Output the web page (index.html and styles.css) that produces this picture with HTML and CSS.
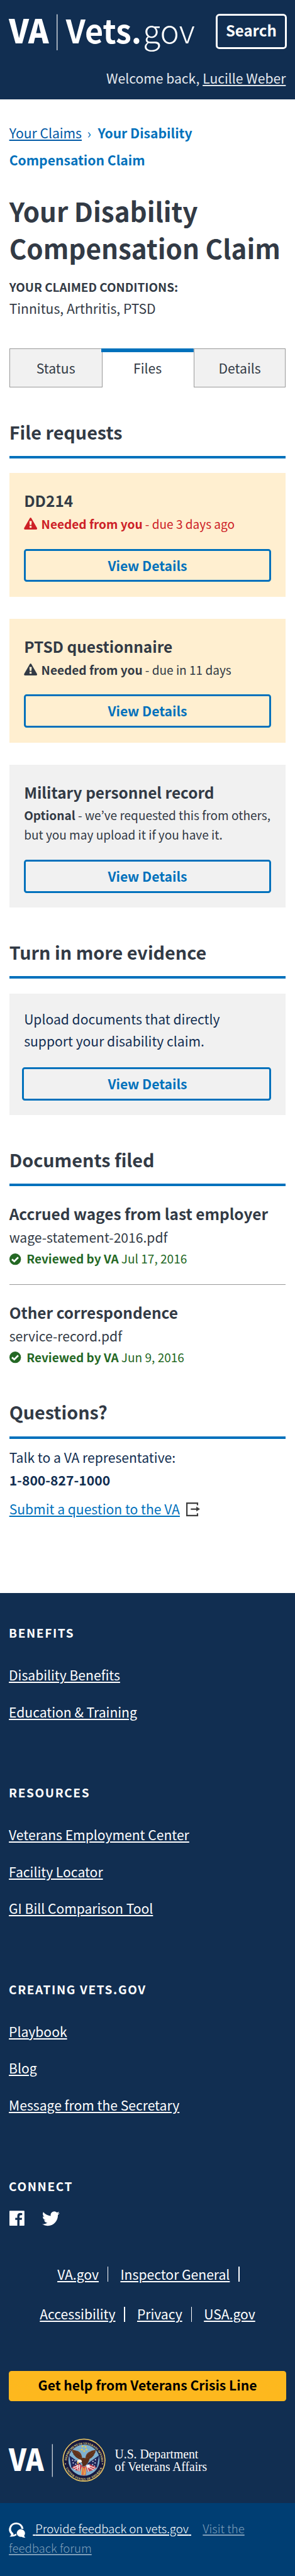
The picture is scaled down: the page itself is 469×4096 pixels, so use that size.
FILE: index.html
```html
<!DOCTYPE html>
<html lang="en">
<head>
<meta charset="utf-8">
<meta name="viewport" content="width=device-width, initial-scale=1">
<title>Your Disability Compensation Claim | Vets.gov</title>
<link rel="stylesheet" href="styles.css">
</head>
<body>
<header class="site-header">
  <div class="header-bar">
    <svg class="brand" viewBox="0 0 440 150" role="img" aria-label="VA Vets.gov">
      <text x="19.5" y="94.7" class="brand-va" textLength="86" lengthAdjust="spacingAndGlyphs">VA</text>
      <rect x="123" y="31" width="1.6" height="78" fill="#fff"/>
      <text x="143" y="94" class="brand-vets" textLength="164" lengthAdjust="spacingAndGlyphs">Vets.</text>
      <text x="310" y="94" class="brand-gov" textLength="112.5" lengthAdjust="spacingAndGlyphs">gov</text>
    </svg>
    <button class="search-button" type="button">Search</button>
  </div>
  <p class="welcome">Welcome back, <a href="#">Lucille Weber</a></p>
</header>

<main class="content">
  <nav class="breadcrumbs"><a href="#">Your Claims</a><span class="crumb-sep">›</span><strong>Your Disability Compensation Claim</strong></nav>
  <h1>Your Disability Compensation Claim</h1>
  <h2 class="conditions-label">Your claimed conditions:</h2>
  <p class="conditions">Tinnitus, Arthritis, PTSD</p>

  <nav class="tabs">
    <a class="tab tab-first" href="#">Status</a>
    <a class="tab tab-active" href="#">Files</a>
    <a class="tab" href="#">Details</a>
  </nav>

  <section class="section">
    <h2 class="section-title">File requests</h2>
    <article class="card card-warning">
      <h3>DD214</h3>
      <p class="card-status overdue"><svg class="warn-icon" viewBox="0 0 29 26"><path fill="currentColor" fill-rule="evenodd" d="M12.9.9Q14.500-.9 16.100.9L28.600 23Q29.400 25.600 27 26H2Q-.4 25.600.4 23ZM12.100 7.600V10L12.700 16H16.300L16.900 10V7.600ZM12.300 18V22H16.700V18Z"/></svg><strong>Needed from you</strong> - due 3 days ago</p>
      <a class="button" href="#">View Details</a>
    </article>
    <article class="card card-warning">
      <h3>PTSD questionnaire</h3>
      <p class="card-status"><svg class="warn-icon" viewBox="0 0 29 26"><path fill="currentColor" fill-rule="evenodd" d="M12.9.9Q14.500-.9 16.100.9L28.600 23Q29.400 25.600 27 26H2Q-.4 25.600.4 23ZM12.100 7.600V10L12.700 16H16.300L16.900 10V7.600ZM12.300 18V22H16.700V18Z"/></svg><strong>Needed from you</strong> - due in 11 days</p>
      <a class="button" href="#">View Details</a>
    </article>
    <article class="card">
      <h3>Military personnel record</h3>
      <p class="card-status"><strong>Optional</strong> - we’ve requested this from others, but you may upload it if you have it.</p>
      <a class="button" href="#">View Details</a>
    </article>
  </section>

  <section class="section">
    <h2 class="section-title">Turn in more evidence</h2>
    <article class="card card-upload">
      <p class="upload-text">Upload documents that directly support your disability claim.</p>
      <a class="button" href="#">View Details</a>
    </article>
  </section>

  <section class="section">
    <h2 class="section-title">Documents filed</h2>
    <article class="document">
      <h3>Accrued wages from last employer</h3>
      <p class="file-name">wage-statement-2016.pdf</p>
      <p class="reviewed"><svg class="check-icon" viewBox="0 0 25 25"><circle cx="12.500" cy="12.500" r="12.500" fill="currentColor"/><path d="M5.500 12.800 10.500 17.300 19 8.600" fill="none" stroke="#fff" stroke-width="3.800"/></svg><strong>Reviewed by VA</strong> Jul 17, 2016</p>
    </article>
    <article class="document">
      <h3>Other correspondence</h3>
      <p class="file-name">service-record.pdf</p>
      <p class="reviewed"><svg class="check-icon" viewBox="0 0 25 25"><circle cx="12.500" cy="12.500" r="12.500" fill="currentColor"/><path d="M5.500 12.800 10.500 17.300 19 8.600" fill="none" stroke="#fff" stroke-width="3.800"/></svg><strong>Reviewed by VA</strong> Jun 9, 2016</p>
    </article>
  </section>

  <section class="section questions">
    <h2 class="section-title">Questions?</h2>
    <p class="phone">Talk to a VA representative:<br><strong>1-800-827-1000</strong></p>
    <p class="submit"><a href="#">Submit a question to the VA</a><svg class="exit-icon" viewBox="0 0 30 30"><path d="M24.500 6V1.500H1.500V28.500H24.500V23.500M10 14.500H24" fill="none" stroke="#3e3e3e" stroke-width="3"/><path d="M22 9 30 14.300 22 19.500Z" fill="#3e3e3e"/></svg></p>
  </section>
</main>

<footer class="site-footer">
  <section class="footer-group">
    <h4>Benefits</h4>
    <ul><li><a href="#">Disability Benefits</a></li><li><a href="#">Education &amp; Training</a></li></ul>
  </section>
  <section class="footer-group">
    <h4>Resources</h4>
    <ul><li><a href="#">Veterans Employment Center</a></li><li><a href="#">Facility Locator</a></li><li><a href="#">GI Bill Comparison Tool</a></li></ul>
  </section>
  <section class="footer-group">
    <h4>Creating Vets.gov</h4>
    <ul><li><a href="#">Playbook</a></li><li><a href="#">Blog</a></li><li><a href="#">Message from the Secretary</a></li></ul>
  </section>
  <section class="connect">
    <h4>Connect</h4>
    <div class="social">
      <svg class="facebook" viewBox="0 0 32 32"><path fill="#fff" fill-rule="evenodd" d="M1 0H31Q32 0 32 1V31Q32 32 31 32H21.500V19.500H26.300L27 15.200H21.500V12Q21.500 9.600 24.200 9.600H27.200V5.200Q25.500 4.900 23.500 4.900 16.800 4.900 16.800 11.400V15.200H12.400V19.500H16.800V32H1Q0 32 0 31V1Q0 0 1 0Z"/></svg>
      <svg class="twitter" viewBox="0 2 24 20" preserveAspectRatio="none"><path fill="#fff" d="M23.953 4.570a10 10 0 0 1-2.825.775 4.958 4.958 0 0 0 2.163-2.723c-.951.555-2.005.959-3.127 1.184a4.920 4.920 0 0 0-8.384 4.482C7.690 8.095 4.067 6.130 1.640 3.162a4.822 4.822 0 0 0-.666 2.475c0 1.710.870 3.213 2.188 4.096a4.904 4.904 0 0 1-2.228-.616v.060a4.923 4.923 0 0 0 3.946 4.827 4.996 4.996 0 0 1-2.212.085 4.936 4.936 0 0 0 4.604 3.417 9.867 9.867 0 0 1-6.102 2.105c-.390 0-.779-.023-1.170-.067a13.995 13.995 0 0 0 7.557 2.209c9.053 0 13.998-7.496 13.998-13.985 0-.210 0-.420-.015-.630A9.935 9.935 0 0 0 24 4.590z"/></svg>
    </div>
  </section>
  <nav class="legal">
    <div class="legal-row legal-row-first"><a href="#">VA.gov</a><span class="bar"></span><a href="#">Inspector General</a><span class="bar"></span></div>
    <div class="legal-row"><a href="#">Accessibility</a><span class="bar"></span><a href="#">Privacy</a><span class="bar"></span><a href="#">USA.gov</a></div>
  </nav>
  <a class="crisis" href="#">Get help from Veterans Crisis Line</a>
  <svg class="va-logo" viewBox="0 0 440 96" role="img" aria-label="VA U.S. Department of Veterans Affairs">
    <defs>
      <path id="arc-top" d="M50 176A112 112 0 0 1 274 176"/>
      <path id="arc-bottom" d="M39 200A127 127 0 0 0 285 200"/>
      <clipPath id="seal-inner"><circle cx="162" cy="166" r="101"/></clipPath>
    </defs>
    <text x="0" y="70.700" class="logo-va" textLength="76" lengthAdjust="spacingAndGlyphs">VA</text>
    <rect x="93.700" y="12.700" width="1.400" height="71" fill="#fff"/>
    <svg x="115.500" y="0" width="95" height="95" viewBox="20 24 284 284">
      <circle cx="162" cy="166" r="140" fill="#16183f"/>
      <circle cx="162" cy="166" r="136" fill="none" stroke="#d8b95a" stroke-width="7"/>
      <circle cx="162" cy="166" r="136" fill="none" stroke="#f6e7a0" stroke-width="2.500" stroke-dasharray="5 5"/>
      <circle cx="162" cy="166" r="101" fill="#7fb1d0"/>
      <g clip-path="url(#seal-inner)">
        <path d="M66 134 142 190 128 236 80 215Z" fill="#20285c"/>
        <path d="M260 134 184 188 200 236 246 212Z" fill="#20285c"/>
        <g fill="#e4e8f2"><circle cx="88" cy="166" r="4"/><circle cx="104" cy="170" r="4"/><circle cx="92" cy="184" r="4"/><circle cx="108" cy="192" r="4"/><circle cx="98" cy="206" r="4"/><circle cx="236" cy="164" r="4"/><circle cx="220" cy="174" r="4"/><circle cx="234" cy="184" r="4"/><circle cx="218" cy="194" r="4"/><circle cx="230" cy="204" r="4"/></g>
        <path d="M82 214 130 188 150 200 136 240 110 232Z" fill="#c8404c"/>
        <path d="M92 216 128 200M98 228 134 206M116 196 124 234M134 194 132 238" stroke="#f3ecec" stroke-width="5"/>
        <path d="M244 214 200 192 172 204 186 242 216 232Z" fill="#c8404c"/>
        <path d="M234 218 198 204M226 230 190 212M180 206 192 240" stroke="#f3ecec" stroke-width="5"/>
        <path d="M148 208 178 206 174 262H144Z" fill="#d6453f"/>
        <path d="M150 212 148 260M160 218 162 264M172 212 168 258" stroke="#f1d257" stroke-width="5"/>
      </g>
      <path d="M82 96Q92 132 112 148L134 162 150 160Q150 120 124 108 100 100 82 96ZM240 98Q210 102 190 116 170 132 172 158L196 160Q226 148 240 98Z" fill="#6b3a20"/>
      <path d="M84 112 134 144M98 106 144 146M236 114 184 146M222 106 178 142M226 132 186 156M92 126 130 154" stroke="#3d2013" stroke-width="3"/>
      <path d="M136 160Q150 146 170 152L198 158Q192 186 168 204L150 206Q156 186 140 178Z" fill="#5a2f1a"/>
      <path d="M116 180Q118 162 136 162 150 164 148 180 138 176 130 182 126 188 122 192Z" fill="#f4f1ea"/>
      <path d="M118 178 128 176 124 192Q114 190 118 178Z" fill="#e4b23c"/>
      <path d="M176 200 196 192 202 210 180 216Z" fill="#eef0f4"/>
      <g fill="#f0cf45"><path id="star" d="M152 68 154.500 74H161L156 78 158 84.500 152 80.500 146 84.500 148 78 143 74H149.500Z"/><use href="#star" x="20" y="3"/><use href="#star" x="-4" y="20"/><use href="#star" x="26" y="20"/><use href="#star" x="11" y="30"/></g>
      <g class="seal-text">
        <text><textPath href="#arc-top" textLength="346" startOffset="8">DEPARTMENT OF VETERANS AFFAIRS</textPath></text>
        <text><textPath href="#arc-bottom" textLength="300" startOffset="18">UNITED STATES OF AMERICA</textPath></text>
      </g>
      <circle cx="42" cy="190" r="3.500" fill="#f3e08a"/><circle cx="282" cy="190" r="3.500" fill="#f3e08a"/>
    </svg>
    <text x="229.800" y="43.700" class="logo-dept" textLength="181" lengthAdjust="spacingAndGlyphs">U.S. Department</text>
    <text x="229.800" y="70.700" class="logo-dept" textLength="200" lengthAdjust="spacingAndGlyphs">of Veterans Affairs</text>
  </svg>
</footer>

<aside class="feedback">
  <svg class="feedback-icon" viewBox="0 0 36 33"><path fill="#fff" d="M16 0A15.700 15 0 0 1 31.800 13.500H27.200A11.200 10.500 0 1 0 9.300 22.500Q11 24 9.500 26.500L13 25.500 16.500 24V28Q10 31.500 1.500 30.500 6 27.500 4.500 25A15.700 15 0 0 1 16 0Z"/><path fill="#fff" d="M26.600 14.500A8.800 8.800 0 0 1 33.200 28.700Q33.500 31 36 32.500 31.500 33 28 30.900A8.800 8.300 0 1 1 26.600 14.500Z"/></svg><a class="feedback-main" href="#">Provide feedback on vets.gov</a><a class="feedback-forum" href="#">Visit the feedback forum</a>
</aside>
</body>
</html>
```
FILE: styles.css
```css
/* 1rem is ten design units */
html {
  font-size: 7.334px;
  background: #003e73;
}

*,
*::before {
  box-sizing: border-box;
}

body {
  margin: 0;
  width: 100%;
  background: #fff;
  color: #323a45;
  font-family: "Noto Sans CJK JP", "Noto Sans", sans-serif;
  font-size: 2.88rem;
  line-height: 4rem;
  -webkit-font-smoothing: antialiased;
}

h1, h2, h3, h4, p, ul {
  margin: 0;
  padding: 0;
}

ul {
  list-style: none;
}

svg {
  display: block;
  overflow: visible;
}

a {
  text-decoration-thickness: 1.5px;
  text-underline-offset: .3rem;
}

/* Header */
.site-header {
  height: 21.6rem;
  background: #112e51;
  color: #e4e8ed;
}

.header-bar {
  display: flex;
  justify-content: space-between;
  height: 10.6rem;
  padding-right: 1.8rem;
}

.brand {
  width: 44rem;
  height: 15rem;
  flex: none;
}

.brand text,
.logo-va {
  fill: #fff;
}

.brand-va {
  font-size: 72px;
  font-weight: 900;
}

.brand-vets {
  font-size: 70px;
  font-weight: 700;
}

.brand-gov {
  font-size: 70px;
  font-weight: 300;
}

.search-button {
  width: 15.4rem;
  height: 7.6rem;
  margin: 3rem 0 0;
  padding: 0 0 .4rem;
  border: 3px solid #fff;
  border-radius: .8rem;
  background: transparent;
  color: #fff;
  font: 700 3.27rem/1 "Noto Sans CJK JP", sans-serif;
}

.welcome {
  margin-top: 4.44rem;
  padding-right: 2rem;
  text-align: right;
}

.welcome a {
  color: inherit;
}

/* Main column */
.content {
  padding: 4.34rem 2rem 16.16rem;
}

.breadcrumbs {
  line-height: 5.8rem;
  color: #0071bc;
}

.breadcrumbs a {
  color: #0059a6;
}

.crumb-sep {
  padding: 0 1.45rem 0 1.15rem;
}

h1 {
  margin-top: 4.25rem;
  font-size: 5.75rem;
  line-height: 8rem;
}

.conditions-label {
  margin-top: 2.38rem;
  font-size: 2.58rem;
  line-height: 4rem;
  text-transform: uppercase;
}

.conditions {
  margin-top: .67rem;
}

/* Tabs */
.tabs {
  display: flex;
  height: 8.4rem;
  margin-top: 6.76rem;
}

.tab {
  width: 20rem;
  border: 1.4px solid #999;
  background: #f1f1f1;
  color: #323a45;
  line-height: 8.2rem;
  text-align: center;
  text-decoration: none;
}

.tab-first {
  width: 20.2rem;
}

.tab-active {
  margin-left: -.2rem;
  border-color: transparent;
  background: linear-gradient(#0071bc, #0071bc) top / 100% 6px no-repeat border-box;
}

/* Sections */
.section {
  margin-top: 6.89rem;
}

.section-title {
  height: 8.51rem;
  border-bottom: .6rem solid #0071bc;
  font-size: 3.92rem;
  line-height: 5.4rem;
}

h3 {
  font-size: 3.33rem;
  line-height: 4rem;
}

.card {
  margin-top: 3.2rem;
  padding: 3.95rem 3.2rem 3.2rem;
  background: #f1f1f1;
}

.card + .card {
  margin-top: 4.8rem;
}

.card-warning {
  background: #ffefd0;
}

.card-status {
  margin: .97rem -1rem 3.28rem 0;
  font-size: 2.6rem;
  line-height: 4.2rem;
}

.overdue {
  color: #cd2026;
}

.warn-icon {
  display: inline-block;
  width: 2.9rem;
  height: 2.6rem;
  margin-right: .85rem;
  vertical-align: -.15rem;
}

.button {
  display: block;
  height: 7.2rem;
  border: 3px solid #0071bc;
  border-radius: .6rem;
  color: #0071bc;
  font-weight: 700;
  line-height: 6.3rem;
  text-align: center;
  text-decoration: none;
}

.card-upload {
  padding-top: 3.14rem;
}

.upload-text {
  width: 46rem;
  margin-bottom: 3.26rem;
  color: #112e51;
  line-height: 4.8rem;
}

.card-upload .button {
  margin-left: -.4rem;
  padding-left: .4rem;
}

.document {
  padding-top: 3.95rem;
}

.document + .document {
  margin-top: 3.53rem;
  border-top: .2rem solid #999;
}

.file-name {
  margin-top: 1.19rem;
}

.reviewed {
  margin-top: .53rem;
  color: #246824;
  font-size: 2.6rem;
}

.check-icon {
  display: inline-block;
  width: 2.5rem;
  height: 2.5rem;
  margin-right: 1.25rem;
  vertical-align: -.25rem;
}

.questions {
  margin-top: 7.22rem;
}

.phone {
  margin-top: 1.74rem;
  color: #112e51;
  line-height: 4.8rem;
}

.submit {
  margin-top: 2rem;
}

.submit a {
  color: #0071bc;
}

.exit-icon {
  display: inline-block;
  width: 3rem;
  height: 3rem;
  margin-left: 1.4rem;
  vertical-align: -.3rem;
}

/* Footer */
.site-footer {
  padding: 6.57rem 1.92rem 4.4rem;
  background: #112e51;
}

.site-footer a {
  color: #fff;
}

h4 {
  color: #fff;
  font-size: 2.6rem;
  letter-spacing: .22rem;
  line-height: 4rem;
  text-transform: uppercase;
}

.footer-group {
  margin-bottom: 13.33rem;
}

.footer-group ul {
  display: grid;
  gap: 4rem;
  margin-top: 5.27rem;
}

.connect {
  padding-top: .2rem;
}

.social {
  display: flex;
  gap: 3.8rem;
  height: 3.4rem;
  margin: 3.28rem 0 0 .15rem;
}

.facebook {
  width: 3.25rem;
  height: 3.3rem;
}

.twitter {
  width: 3.8rem;
  height: 3.2rem;
  margin-top: .2rem;
}

.legal {
  margin-top: 6.11rem;
}

.legal-row {
  display: flex;
  align-items: center;
  justify-content: center;
  height: 8.65rem;
}

.legal-row-first {
  padding-left: .4rem;
}

.bar {
  width: 1.5px;
  height: 3.3rem;
  margin: 0 2.6rem 0 1.9rem;
  background: #fff;
}

.bar:last-child {
  margin-right: 0;
}

.crisis {
  display: block;
  height: 6.5rem;
  margin-top: 8.01rem;
  border-radius: .6rem;
  background: #fdb81e;
  font-weight: 700;
  line-height: 6rem;
  text-align: center;
  text-decoration: none;
}

.site-footer .crisis {
  color: #000;
}

.va-logo {
  width: 44rem;
  height: 9.6rem;
  margin-top: 8.07rem;
}

.logo-va {
  font-size: 65px;
  font-weight: 900;
}

.logo-dept {
  fill: #fff;
  font-family: "Liberation Serif", serif;
  font-size: 29px;
}

.seal-text {
  fill: #f3e08a;
  font-family: "Liberation Serif", serif;
  font-size: 19px;
  font-weight: 700;
}

/* Feedback band */
.feedback {
  padding: 3.5rem 1.92rem 3.4rem;
  background: #003e73;
  font-size: 2.54rem;
  font-weight: 300;
  line-height: 4.2rem;
}

.feedback-icon {
  display: inline-block;
  width: 3.6rem;
  height: 3.3rem;
  margin-right: 1.6rem;
  vertical-align: -.9rem;
}

.feedback-main {
  margin-right: 2.5rem;
  color: #fff;
}

.feedback-main::before,
.feedback-main::after {
  content: "\00a0";
}

.feedback-forum {
  color: #7f9eb9;
}
```
